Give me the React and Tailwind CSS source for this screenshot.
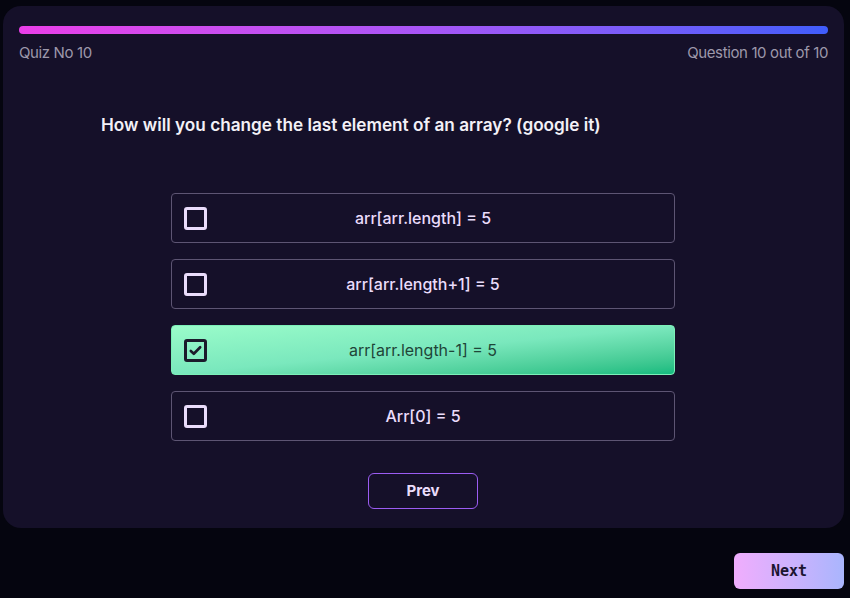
import { useState } from 'react';

const options = [
  'arr[arr.length] = 5',
  'arr[arr.length+1] = 5',
  'arr[arr.length-1] = 5',
  'Arr[0] = 5',
];

const font = { fontFamily: 'Inter, "Open Sans", sans-serif' };

const Checkbox = ({ checked }) => (
  <div
    className={`w-[23px] h-[23px] rounded-[3px] border-[3px] flex items-center justify-center shrink-0 ${
      checked ? 'border-[#1b1b2b]' : 'border-[#eadcfb]'
    }`}
  >
    {checked && (
      <svg width="15" height="15" viewBox="0 0 16 16" fill="none">
        <path d="M3 8.5l3.2 3L13 4.5" stroke="#1b1b2b" strokeWidth="2.8" strokeLinecap="round" strokeLinejoin="round" />
      </svg>
    )}
  </div>
);

export default function App() {
  const [selected, setSelected] = useState(2);

  return (
    <div className="w-[850px] h-[598px] bg-[#05050f] relative overflow-hidden" style={font}>
      <div className="absolute left-[3px] top-[6px] w-[841px] h-[522px] bg-[#151029] rounded-[18px] px-4 pt-5">
        {/* Progress */}
        <div className="h-2 w-[809px] rounded-full bg-gradient-to-r from-[#ea3ee8] via-[#a855f7] to-[#3f5dfb]" />
        <div className="flex justify-between w-[809px] mt-[8px] text-[15px] text-[#9d98ab] tracking-tight">
          <span>Quiz No 10</span>
          <span>Question 10 out of 10</span>
        </div>

        <div className="pl-[82px] mt-[47px] text-[17.2px] font-semibold text-[#f3f1f7]">
          How will you change the last element of an array? (google it)
        </div>

        <div className="flex flex-col gap-4 ml-[152px] w-[504px] mt-[56px]">
          {options.map((opt, i) => {
            const checked = selected === i;
            return (
              <button
                key={opt}
                onClick={() => setSelected(i)}
                className={`h-[50px] rounded-[4px] border flex items-center px-3 relative ${
                  checked
                    ? 'border-[#7cf0b8] bg-gradient-to-br from-[#9afcca] via-[#7ae8bd] to-[#10bb7f]'
                    : 'border-[#5d5573] bg-[#151029]'
                }`}
              >
                <Checkbox checked={checked} />
                <span
                  className={`absolute inset-0 flex items-center justify-center text-[16px] ${
                    checked ? 'text-[#1f4538]' : 'text-[#eadcfb] font-medium'
                  }`}
                >
                  {opt}
                </span>
              </button>
            );
          })}
        </div>

        <div className="flex justify-center ml-[152px] w-[504px] mt-8">
          <button className="w-[110px] h-9 rounded-md border border-[#9b5cf2] text-[15px] font-bold text-[#eadcfb]">
            Prev
          </button>
        </div>
      </div>

      <button
        className="absolute left-[734px] top-[553px] w-[110px] h-9 rounded-md bg-gradient-to-r from-[#f0adfd] to-[#a9b5fd] text-[15px] font-bold text-[#1b1530]"
        style={{ fontFamily: '"DejaVu Sans Mono", monospace' }}
      >
        Next
      </button>
    </div>
  );
}
